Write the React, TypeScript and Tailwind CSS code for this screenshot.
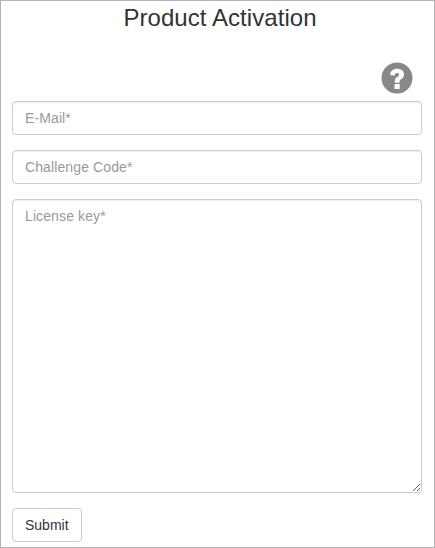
import React from "react";

const fieldClass =
  "block w-full rounded border border-[#ccc] bg-white px-3 py-1.5 text-sm leading-5 tracking-[0.11px] text-[#555] shadow-[inset_0_1px_1px_rgba(0,0,0,0.075)] outline-none placeholder:text-[#999] focus:border-[#66afe9]";

function HelpIcon() {
  return (
    <svg width="32" height="32" viewBox="0 0 32 32" aria-hidden="true">
      <circle cx="16" cy="16" r="15.5" fill="#888" />
      <path
        fill="#fff"
        d="M9.2 13C9.3 9.2 12 6.8 16.1 6.8c4.1 0 6.9 2.2 6.9 5.6 0 2.1-1.1 3.4-2.7 4.6-1.3 1-1.7 1.5-1.7 2.7v1h-4.8v-1.6c0-2 .9-3 2.4-4 1.3-.9 1.8-1.4 1.8-2.3 0-1.1-.7-1.7-1.9-1.7-1.5 0-2.2.8-2.3 2.4zM13.6 22h5.1v5h-5.1z"
      />
    </svg>
  );
}

export default function App() {
  return (
    <main className="h-[548px] w-[435px] overflow-hidden border border-[#b3b3b3] bg-white pr-3 pl-[11px] font-['Liberation_Sans',Arial,sans-serif] text-[#333]">
      <h1 className="pt-1 pl-[6px] text-center text-2xl leading-[26px] font-normal tracking-[0.06px]">
        Product Activation
      </h1>
      <div className="mt-[31px] flex h-10 justify-end pr-[9px]">
        <button type="button" aria-label="Help" className="h-8 w-8">
          <HelpIcon />
        </button>
      </div>
      <form className="-mt-px flex flex-col items-start gap-[15px]" onSubmit={(e) => e.preventDefault()}>
        <input className={`${fieldClass} h-[34px]`} placeholder="E-Mail*" />
        <input className={`${fieldClass} h-[34px]`} placeholder="Challenge Code*" />
        <textarea className={`${fieldClass} h-[294px] resize`} placeholder="License key*" />
        <button
          type="submit"
          className="h-[34px] rounded border border-[#ccc] bg-white px-3 py-1.5 text-sm leading-5 text-[#333]"
        >
          Submit
        </button>
      </form>
    </main>
  );
}
